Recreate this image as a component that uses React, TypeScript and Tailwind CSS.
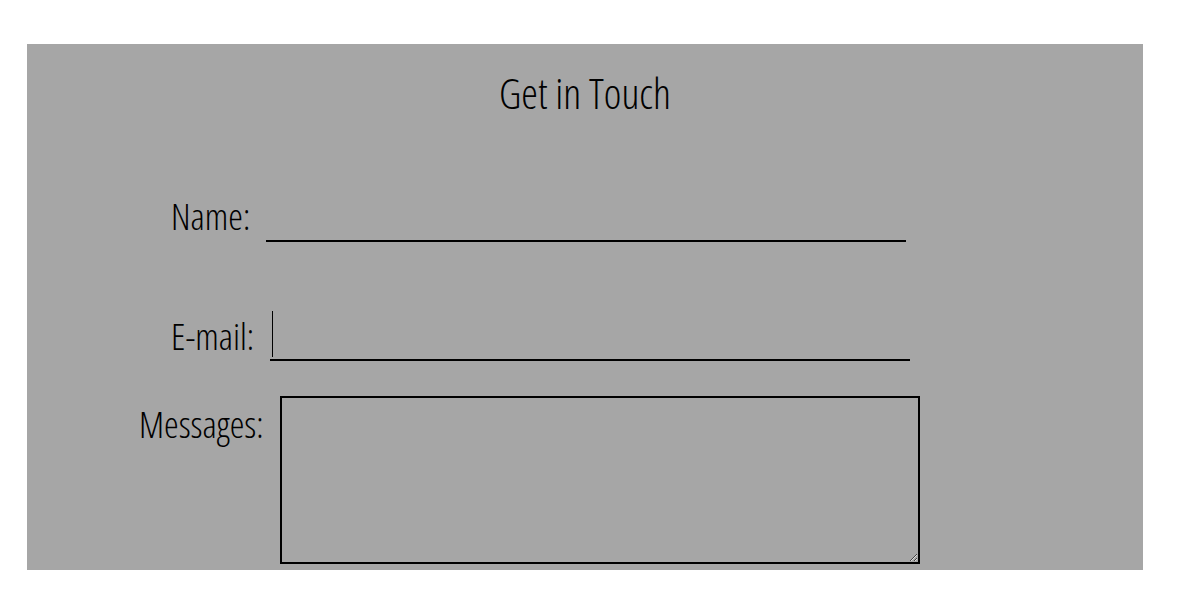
export default function App() {
  return (
    <main className="min-h-screen bg-white pt-[44px] font-['Open_Sans',sans-serif] font-light [font-stretch:75%] text-black">
      <section className="ml-[27px] h-[526px] w-[1116px] bg-[#a6a6a6]">
        <h2 className="pt-[28px] text-center text-[42px] leading-none">Get in Touch</h2>

        <form className="flex flex-col">
          <div className="mt-[78px] flex items-end pl-[144px]">
            <label htmlFor="name" className="mb-[8px] text-[37px] leading-none">
              Name:
            </label>
            <input
              id="name"
              type="text"
              className="ml-[16px] h-[50px] w-[640px] border-b-2 border-black bg-transparent outline-none"
            />
          </div>

          <div className="mt-[69px] flex items-end pl-[144px]">
            <label htmlFor="email" className="mb-[7px] text-[37px] leading-none">
              E-mail:
            </label>
            <div className="relative ml-[16px]">
              <input
                id="email"
                type="email"
                className="h-[50px] w-[640px] border-b-2 border-black bg-transparent outline-none"
              />
              <span className="absolute left-[2px] top-0 h-[46px] w-px bg-black" />
            </div>
          </div>

          <div className="mt-[35px] flex items-start pl-[112px]">
            <label htmlFor="messages" className="mt-[9px] text-[37px] leading-none">
              Messages:
            </label>
            <textarea
              id="messages"
              className="ml-[16px] h-[168px] w-[640px] border-2 border-black bg-transparent outline-none"
            />
          </div>
        </form>
      </section>
    </main>
  )
}
